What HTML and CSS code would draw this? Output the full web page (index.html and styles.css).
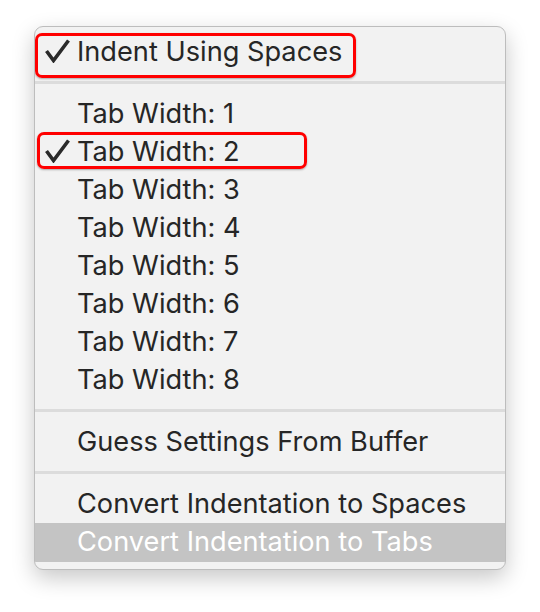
FILE: index.html
```html
<!DOCTYPE html>
<html>
<head>
<meta charset="utf-8">
<link rel="stylesheet" href="styles.css">
</head>
<body>
<div class="menu">
  <div class="item checked">
    <svg class="check" width="25" height="24" viewBox="0 0 25 24"><path d="M1.5 12 L8.5 21.5 L23.5 1.5" fill="none" stroke="#2a2a2a" stroke-width="3.6" stroke-linejoin="miter"/></svg>Indent Using Spaces
    <span class="mark mark-a"></span>
  </div>
  <div class="sep"></div>
  <div class="item">Tab Width: 1</div>
  <div class="item checked">
    <svg class="check" width="25" height="24" viewBox="0 0 25 24"><path d="M1.5 12 L8.5 21.5 L23.5 1.5" fill="none" stroke="#2a2a2a" stroke-width="3.6" stroke-linejoin="miter"/></svg>Tab Width: 2
    <span class="mark mark-b"></span>
  </div>
  <div class="item">Tab Width: 3</div>
  <div class="item">Tab Width: 4</div>
  <div class="item">Tab Width: 5</div>
  <div class="item">Tab Width: 6</div>
  <div class="item">Tab Width: 7</div>
  <div class="item">Tab Width: 8</div>
  <div class="sep"></div>
  <div class="item">Guess Settings From Buffer</div>
  <div class="sep"></div>
  <div class="item">Convert Indentation to Spaces</div>
  <div class="item active">Convert Indentation to Tabs</div>
</div>
</body>
</html>
```

FILE: styles.css
```css
html, body {
  margin: 0;
  padding: 0;
  background: #ffffff;
}
body {
  width: 540px;
  height: 612px;
  padding: 26px 0 0 34px;
  box-sizing: border-box;
  font-family: "Inter", "Liberation Sans", sans-serif;
}
.menu {
  width: 472px;
  height: 544px;
  box-sizing: border-box;
  background: #f2f2f2;
  border: 1px solid #bdbdbd;
  border-radius: 9px;
  padding: 6px 0 7px;
  box-shadow: 0 8px 22px rgba(0,0,0,0.22);
  overflow: hidden;
}
.item {
  position: relative;
  height: 38px;
  line-height: 38px;
  padding-left: 42px;
  font-size: 27.2px;
  color: #262626;
  white-space: nowrap;
}
.check {
  position: absolute;
  left: 10px;
  top: 6px;
}
.item.active {
  height: 39px;
  background: #c4c4c4;
  color: #ffffff;
}
.sep {
  height: 3px;
  background: #dcdcdc;
  margin: 10px 0 11px;
}
.mark {
  position: absolute;
  border: 3px solid #ff0000;
  border-radius: 7px;
  box-shadow: 0 1px 2px rgba(0,0,0,0.3);
}
.mark-a {
  left: 0;
  top: 0;
  width: 315px;
  height: 39px;
}
.mark-b {
  left: 2px;
  top: -1px;
  width: 264px;
  height: 31px;
}
```
